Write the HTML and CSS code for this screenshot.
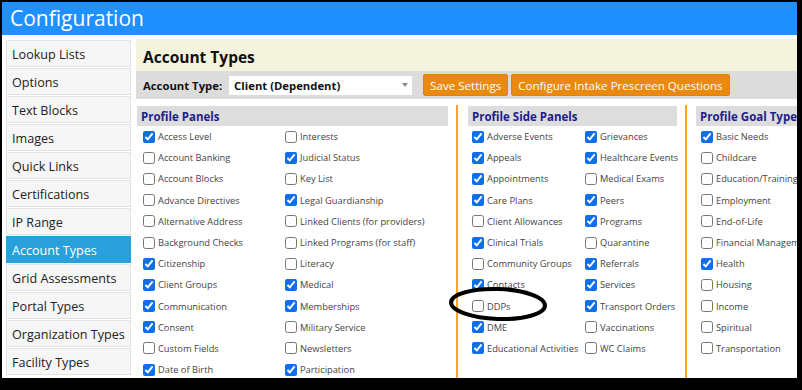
FILE: index.html
```html
<!DOCTYPE html>
<html lang="en">
<head>
    <meta charset="UTF-8">
    <meta name="viewport" content="width=device-width, initial-scale=1.0">
    <title>Configuration</title>
    <link rel="stylesheet" href="styles.css">
</head>
<body>
    <div class="config-frame">
        <header class="config-topbar">Configuration</header>

        <div class="config-layout">
            <nav class="config-sidebar">
                <a class="config-nav-item">Lookup Lists</a>
                <a class="config-nav-item">Options</a>
                <a class="config-nav-item">Text Blocks</a>
                <a class="config-nav-item">Images</a>
                <a class="config-nav-item">Quick Links</a>
                <a class="config-nav-item">Certifications</a>
                <a class="config-nav-item">IP Range</a>
                <a class="config-nav-item active">Account Types</a>
                <a class="config-nav-item">Grid Assessments</a>
                <a class="config-nav-item">Portal Types</a>
                <a class="config-nav-item">Organization Types</a>
                <a class="config-nav-item">Facility Types</a>
            </nav>

            <main class="config-content">
                <div class="config-title-bar">
                    <h1 class="config-title">Account Types</h1>
                </div>

                <div class="config-toolbar">
                    <label class="config-toolbar-label">Account Type:</label>
                    <div class="config-select">
                        <span>Client (Dependent)</span>
                        <span class="config-select-arrow"></span>
                    </div>
                    <button class="config-button">Save Settings</button>
                    <button class="config-button">Configure Intake Prescreen Questions</button>
                </div>

                <div class="config-panels">
                    <section class="config-panel panel-profile">
                        <h2 class="config-panel-title">Profile Panels</h2>
                        <div class="config-checks">
                            <label class="config-check"><input type="checkbox" checked> Access Level</label>
                            <label class="config-check"><input type="checkbox"> Interests</label>
                            <label class="config-check"><input type="checkbox"> Account Banking</label>
                            <label class="config-check"><input type="checkbox" checked> Judicial Status</label>
                            <label class="config-check"><input type="checkbox"> Account Blocks</label>
                            <label class="config-check"><input type="checkbox"> Key List</label>
                            <label class="config-check"><input type="checkbox"> Advance Directives</label>
                            <label class="config-check"><input type="checkbox" checked> Legal Guardianship</label>
                            <label class="config-check"><input type="checkbox"> Alternative Address</label>
                            <label class="config-check"><input type="checkbox"> Linked Clients (for providers)</label>
                            <label class="config-check"><input type="checkbox"> Background Checks</label>
                            <label class="config-check"><input type="checkbox"> Linked Programs (for staff)</label>
                            <label class="config-check"><input type="checkbox" checked> Citizenship</label>
                            <label class="config-check"><input type="checkbox"> Literacy</label>
                            <label class="config-check"><input type="checkbox" checked> Client Groups</label>
                            <label class="config-check"><input type="checkbox" checked> Medical</label>
                            <label class="config-check"><input type="checkbox" checked> Communication</label>
                            <label class="config-check"><input type="checkbox" checked> Memberships</label>
                            <label class="config-check"><input type="checkbox" checked> Consent</label>
                            <label class="config-check"><input type="checkbox"> Military Service</label>
                            <label class="config-check"><input type="checkbox"> Custom Fields</label>
                            <label class="config-check"><input type="checkbox"> Newsletters</label>
                            <label class="config-check"><input type="checkbox" checked> Date of Birth</label>
                            <label class="config-check"><input type="checkbox" checked> Participation</label>
                        </div>
                    </section>

                    <section class="config-panel panel-side">
                        <h2 class="config-panel-title">Profile Side Panels</h2>
                        <div class="config-checks">
                            <label class="config-check"><input type="checkbox" checked> Adverse Events</label>
                            <label class="config-check"><input type="checkbox" checked> Grievances</label>
                            <label class="config-check"><input type="checkbox" checked> Appeals</label>
                            <label class="config-check"><input type="checkbox" checked> Healthcare Events</label>
                            <label class="config-check"><input type="checkbox" checked> Appointments</label>
                            <label class="config-check"><input type="checkbox"> Medical Exams</label>
                            <label class="config-check"><input type="checkbox" checked> Care Plans</label>
                            <label class="config-check"><input type="checkbox" checked> Peers</label>
                            <label class="config-check"><input type="checkbox"> Client Allowances</label>
                            <label class="config-check"><input type="checkbox" checked> Programs</label>
                            <label class="config-check"><input type="checkbox" checked> Clinical Trials</label>
                            <label class="config-check"><input type="checkbox"> Quarantine</label>
                            <label class="config-check"><input type="checkbox"> Community Groups</label>
                            <label class="config-check"><input type="checkbox" checked> Referrals</label>
                            <label class="config-check"><input type="checkbox" checked> Contacts</label>
                            <label class="config-check"><input type="checkbox" checked> Services</label>
                            <label class="config-check"><input type="checkbox"> DDPs</label>
                            <label class="config-check"><input type="checkbox" checked> Transport Orders</label>
                            <label class="config-check"><input type="checkbox" checked> DME</label>
                            <label class="config-check"><input type="checkbox"> Vaccinations</label>
                            <label class="config-check"><input type="checkbox" checked> Educational Activities</label>
                            <label class="config-check"><input type="checkbox"> WC Claims</label>
                        </div>
                    </section>

                    <section class="config-panel panel-goal">
                        <h2 class="config-panel-title">Profile Goal Types</h2>
                        <div class="config-checks">
                            <label class="config-check"><input type="checkbox" checked> Basic Needs</label>
                            <label class="config-check"><input type="checkbox"> Childcare</label>
                            <label class="config-check"><input type="checkbox"> Education/Training</label>
                            <label class="config-check"><input type="checkbox"> Employment</label>
                            <label class="config-check"><input type="checkbox"> End-of-Life</label>
                            <label class="config-check"><input type="checkbox"> Financial Management</label>
                            <label class="config-check"><input type="checkbox" checked> Health</label>
                            <label class="config-check"><input type="checkbox"> Housing</label>
                            <label class="config-check"><input type="checkbox"> Income</label>
                            <label class="config-check"><input type="checkbox"> Spiritual</label>
                            <label class="config-check"><input type="checkbox"> Transportation</label>
                        </div>
                    </section>
                </div>
            </main>
        </div>

        <!-- hand drawn marker round DDPs -->
        <svg class="config-annotation" width="110" height="44" viewBox="0 0 110 44">
            <ellipse cx="55" cy="22" rx="47" ry="15" transform="rotate(2 55 22)" fill="none" stroke="#000" stroke-width="4"/>
        </svg>
    </div>
</body>
</html>
```

FILE: styles.css
```css
body {
    margin: 0;
    background-color: #000;
    font-family: 'Open Sans', 'Noto Sans', sans-serif;
}

.config-frame {
    position: relative;
    margin: 2px 0 0 2px;
    width: 795px;
    height: 376px;
    background-color: #fff;
    overflow: hidden;
}

.config-topbar {
    height: 33px;
    line-height: 33px;
    padding-left: 8px;
    background-color: #1e90ff;
    color: #fff;
    font-size: 21px;
}

.config-layout {
    display: flex;
    margin-top: 4px;
}

.config-sidebar {
    display: flex;
    flex-direction: column;
    gap: 1px;
    width: 125px;
    margin-left: 4px;
    margin-top: 1px;
    flex-shrink: 0;
}

.config-nav-item {
    display: block;
    height: 25px;
    line-height: 27px;
    padding-left: 5px;
    border: 1px solid #e3e3e3;
    background-color: #f6f6f6;
    color: #222;
    font-size: 12.6px;
    white-space: nowrap;
    overflow: hidden;
}

.config-nav-item.active {
    border-color: #29a0dc;
    background-color: #29a0dc;
    color: #fff;
}

.config-content {
    flex: 1;
    margin-left: 5px;
    min-width: 0;
}

.config-title-bar {
    height: 32px;
    padding-left: 7px;
    background-color: #f4f4de;
}

.config-title {
    margin: 0;
    padding-top: 2px;
    line-height: 32px;
    font-size: 15.5px;
    font-weight: bold;
    color: #111;
}

.config-toolbar {
    display: flex;
    align-items: center;
    height: 28px;
    padding-left: 7px;
    background-color: #dcdcdc;
}

.config-toolbar-label {
    font-size: 11.3px;
    font-weight: bold;
    color: #111;
    margin-right: 7px;
}

.config-select {
    display: flex;
    align-items: center;
    justify-content: space-between;
    width: 174px;
    height: 19px;
    padding: 0 4px 0 5px;
    background-color: #fff;
    font-size: 11.3px;
    font-weight: bold;
    color: #111;
}

.config-select-arrow {
    border-left: 3px solid transparent;
    border-right: 3px solid transparent;
    border-top: 4px solid #888;
}

.config-button {
    height: 22px;
    margin-left: 11px;
    padding: 0 6px;
    border: 1px solid #e0830a;
    border-radius: 2px;
    background-color: #e98a0e;
    color: #fff;
    font-family: inherit;
    font-size: 11.6px;
}

.config-button + .config-button {
    margin-left: 3px;
}

.config-panels {
    display: flex;
    margin-top: 6px;
    margin-left: 1px;
}

.config-panel {
    flex-shrink: 0;
    height: 274px;
}

.panel-profile {
    width: 311px;
    margin-right: 8px;
}

.panel-side {
    width: 209px;
    margin-right: 8px;
    padding-left: 10px;
    border-left: 2px solid #f6a623;
}

.panel-goal {
    width: 200px;
    padding-left: 9px;
    border-left: 2px solid #f6a623;
}

.config-panel-title {
    margin: 1px 0 0 0;
    height: 20px;
    line-height: 22px;
    padding-left: 4px;
    background-color: #dddddd;
    color: #221d8c;
    font-size: 11.5px;
    font-weight: bold;
    white-space: nowrap;
    overflow: hidden;
}

.config-checks {
    display: grid;
    grid-auto-rows: 21.2px;
}

.panel-profile .config-checks {
    grid-template-columns: 142px 1fr;
    padding-left: 6px;
}

.panel-side .config-checks {
    grid-template-columns: 113px 1fr;
    padding-left: 4px;
}

.panel-goal .config-checks {
    grid-template-columns: 1fr;
    padding-left: 5px;
}

.config-check {
    display: flex;
    align-items: center;
    font-size: 9.3px;
    color: #444;
    white-space: nowrap;
}

.config-check input {
    width: 12px;
    height: 12px;
    margin: 0 3px 0 0;
    accent-color: #0f6fe8;
}

.config-annotation {
    position: absolute;
    left: 441px;
    top: 280px;
}
```
